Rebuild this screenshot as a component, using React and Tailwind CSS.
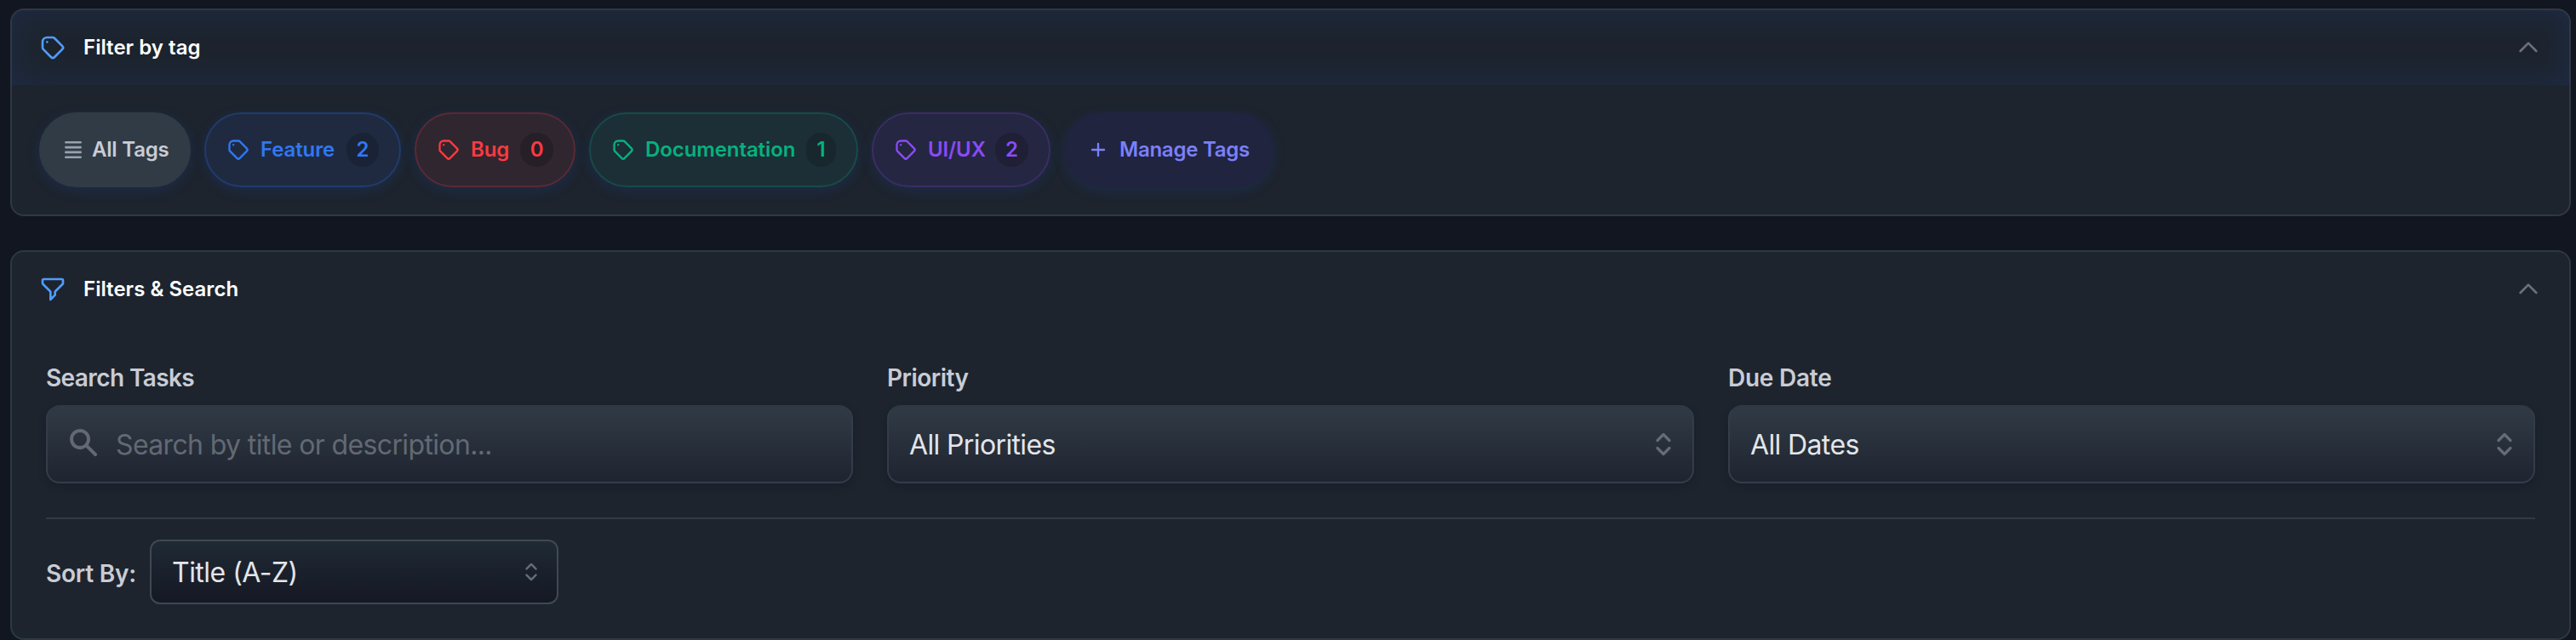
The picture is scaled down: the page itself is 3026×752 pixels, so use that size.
import React from "react";

const OUTLINE = {
  fill: "none",
  stroke: "currentColor",
  strokeWidth: 2,
  strokeLinecap: "round",
  strokeLinejoin: "round",
  viewBox: "0 0 24 24",
};

function TagIcon({ className }) {
  return (
    <svg {...OUTLINE} className={className}>
      <path d="M7 7h.01M7 3h5c.512 0 1.024.195 1.414.586l7 7a2 2 0 010 2.828l-7 7a2 2 0 01-2.828 0l-7-7A1.994 1.994 0 013 12V7a4 4 0 014-4z" />
    </svg>
  );
}

function FunnelIcon({ className }) {
  return (
    <svg {...OUTLINE} className={className}>
      <path d="M3 4a1 1 0 011-1h16a1 1 0 011 1v2.586a1 1 0 01-.293.707l-6.414 6.414a1 1 0 00-.293.707V17l-4 4v-6.586a1 1 0 00-.293-.707L3.293 7.293A1 1 0 013 6.586V4z" />
    </svg>
  );
}

function ChevronUp() {
  return (
    <svg {...OUTLINE} className="ml-auto size-8 text-[#6a707c]">
      <path d="M5 15l7-7 7 7" />
    </svg>
  );
}

function Selector({ className }) {
  return (
    <svg viewBox="0 0 20 28" fill="none" stroke="currentColor" strokeWidth="3.2" strokeLinecap="round" strokeLinejoin="round" className={className}>
      <path d="M3 9.5l7-7 7 7M3 18.5l7 7 7-7" />
    </svg>
  );
}

function CardHeader({ icon, title, className }) {
  return (
    <div className={`flex h-[88px] items-center px-8 ${className}`}>
      {icon}
      <h2 className="ml-5 text-[24px] leading-8 font-semibold tracking-[0.03px] text-white">{title}</h2>
      <ChevronUp />
    </div>
  );
}

const TAGS = [
  { name: "Feature", count: 2, pill: "w-[231px] border-[#213b6c] bg-[#1f2a41] text-[#2f78f3]", badge: "w-[38px] bg-[#1a2336]" },
  { name: "Bug", count: 0, pill: "w-[189px] border-[#5a2a34] bg-[#2f2630] text-[#fb3a40]", badge: "w-[39px] bg-[#261f28]" },
  { name: "Documentation", count: 1, pill: "w-[316px] border-[#174b47] bg-[#1c2f36] text-[#06b27d]", badge: "w-[35px] bg-[#17272d]" },
  { name: "UI/UX", count: 2, pill: "w-[210px] border-[#3b2d64] bg-[#252642] text-[#8a4bf5]", badge: "w-[39px] bg-[#1f1f35]" },
];

const PILL = "flex h-[88px] items-center rounded-[44px] border-2 px-6 text-[24px] leading-8 font-[560] tracking-[-0.1px] shadow-[0_4px_14px_rgba(28,64,140,0.28)]";

function TagPill({ tag }) {
  return (
    <button className={`${PILL} ${tag.pill}`}>
      <TagIcon className="size-7 shrink-0" />
      <span className="ml-3 whitespace-nowrap">{tag.name}</span>
      <span className={`ml-auto flex h-10 items-center justify-center rounded-full ${tag.badge}`}>{tag.count}</span>
    </button>
  );
}

const FIELD = "flex h-[92px] items-center rounded-2xl border-2 border-[#333d49] border-t-[#2f3944] bg-linear-to-b from-[#303a45] to-[#1f2530] px-6 text-[32px] leading-10 font-[440] tracking-[-0.63px] shadow-[0_4px_8px_rgba(16,20,30,0.25)]";

function Label({ children, className }) {
  return <label className={`text-[28px] leading-10 font-[560] text-[#c9ccd4] ${className}`}>{children}</label>;
}

function SelectField({ label, value, labelClass }) {
  return (
    <div className="flex flex-col gap-3">
      <Label className={labelClass}>{label}</Label>
      <div className={`${FIELD} justify-between text-[#e3e5ea]`}>
        <span className="pt-0.5">{value}</span>
        <Selector className="h-7 w-5 text-[#656c78]" />
      </div>
    </div>
  );
}

export default function App() {
  return (
    <main className="flex h-[752px] w-[3026px] flex-col gap-10 overflow-hidden bg-[#121621] pt-[10px] pr-[6px] pl-3 font-['Inter','Liberation_Sans',sans-serif]">
      <section className="h-[244px] overflow-hidden rounded-2xl border-2 border-[#303844] bg-[#1d242e]">
        <CardHeader
          icon={<TagIcon className="size-8 text-[#4f9cf9]" />}
          title="Filter by tag"
          className="shadow-[inset_0_0_40px_rgba(32,64,130,0.3)]"
        />
        <div className="flex gap-4 px-8 pt-8">
          <button className={`${PILL} w-[178px] border-[#313b46] bg-[#313b46] text-[#c9ccd4]`}>
            <svg viewBox="0 0 28 28" fill="none" stroke="currentColor" strokeWidth="2.6" strokeLinecap="round" className="size-7 shrink-0 text-[#98a1ae]">
              <path d="M5.3 5.3h17.4M5.3 11.1h17.4M5.3 16.9h17.4M5.3 22.7h17.4" />
            </svg>
            <span className="ml-2 whitespace-nowrap tracking-[-0.2px]">All Tags</span>
          </button>
          {TAGS.map((tag) => (
            <TagPill key={tag.name} tag={tag} />
          ))}
          <button className={`${PILL} w-[246px] border-[#20243f] bg-[#20243f] text-[#7b80fa]`}>
            <svg {...OUTLINE} className="size-7 shrink-0">
              <path d="M12 6v12M6 12h12" />
            </svg>
            <span className="ml-[11px] whitespace-nowrap tracking-[-0.25px]">Manage Tags</span>
          </button>
        </div>
      </section>

      <section className="h-[458px] rounded-2xl border-2 border-[#2c3843] bg-[#1d242e]">
        <CardHeader
          icon={<FunnelIcon className="size-8 text-[#4f9cf9]" />}
          title="Filters & Search"
          className=""
        />
        <div className="mx-10 mt-10 grid grid-cols-3 gap-10">
          <div className="flex flex-col gap-3">
            <Label className="tracking-[-0.6px]">Search Tasks</Label>
            <div className={`${FIELD} text-[#636974]`}>
              <svg viewBox="0 0 20 20" fill="currentColor" className="mb-1 -ml-0.5 size-10">
                <path fillRule="evenodd" clipRule="evenodd" d="M8 4a4 4 0 100 8 4 4 0 000-8zM2 8a6 6 0 1110.89 3.476l4.817 4.817a1 1 0 01-1.414 1.414l-4.816-4.816A6 6 0 012 8z" />
              </svg>
              <span className="ml-[18px] pt-0.5">Search by title or description...</span>
            </div>
          </div>
          <SelectField label="Priority" value="All Priorities" labelClass="tracking-[-0.5px]" />
          <SelectField label="Due Date" value="All Dates" labelClass="tracking-[-0.25px]" />
        </div>
        <div className="mx-10 mt-10 flex items-center border-t-2 border-[#303a46] pt-6">
          <Label className="w-[106px] pt-[3px] tracking-[-0.2px] whitespace-nowrap">Sort By:</Label>
          <div className="ml-4 flex h-[76px] w-[480px] items-center justify-between rounded-xl border-2 border-[#3f4853] bg-linear-to-b from-[#1f2a34] to-[#151824] pr-[22px] pl-6 text-[32px] leading-10 font-[440] tracking-[-0.52px] text-[#e3e5ea]">
            <span className="pt-0.5">Title (A-Z)</span>
            <Selector className="h-[22px] w-4 text-[#656c78]" />
          </div>
        </div>
      </section>
    </main>
  );
}
